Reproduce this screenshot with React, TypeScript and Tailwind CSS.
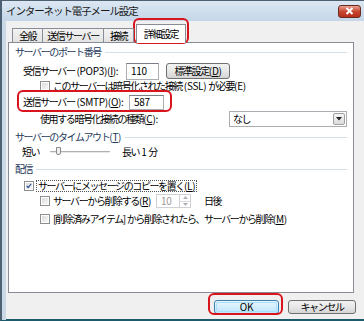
import React from "react";

const font = "font-['Noto_Sans_CJK_JP','Noto_Sans',sans-serif]";

function L({ children }: { children: React.ReactNode }) {
  return <span className="tracking-[-0.3px]">{children}</span>;
}

function Check({ checked = false }: { checked?: boolean }) {
  return (
    <div className="w-[10px] h-[10px] shrink-0 border border-[#8f8f8f] bg-white p-[1px]">
      <div className="w-full h-full bg-gradient-to-br from-[#dcdcdc] to-[#f7f7f7] flex items-center justify-center">
        {checked && (
          <svg width="8" height="8" viewBox="0 0 8 8">
            <path d="M1 4 L3 6 L7 1" stroke="#2a4d8f" strokeWidth="1.6" fill="none" />
          </svg>
        )}
      </div>
    </div>
  );
}

function GroupLabel({ text }: { text: React.ReactNode }) {
  return (
    <div className="flex items-center h-[14px]">
      <span className="text-[#1e395b]">{text}</span>
      <div className="flex-1 h-px bg-[#d5dfe5] ml-[4px]" />
    </div>
  );
}

export default function App() {
  return (
    <div className={`w-[364px] h-[321px] relative overflow-hidden bg-[#f0f0f0] text-[10px] tracking-[-1.4px] leading-none whitespace-nowrap text-black ${font}`}>
      <div className="w-full h-full flex flex-col border-l-2 border-l-[#4d6173] border-t border-t-[#4d6173] border-b-2 border-b-[#1c5a6c]">
        {/* title bar */}
        <div className="h-[20px] shrink-0 flex items-center justify-between bg-gradient-to-b from-[#dce7f2] to-[#c4d6e8] pl-[4px] pr-[3px]">
          <span className="text-[10.5px] tracking-[-1.1px] text-[#1a1a1a]">インターネット電子メール設定</span>
          <div className="w-[23px] h-[13px] rounded-[3px] border border-[#6b2a20] bg-gradient-to-b from-[#e8a090] via-[#c8452f] to-[#b5301c] flex items-center justify-center">
            <svg width="9" height="8" viewBox="0 0 9 8">
              <path d="M1.5 1 L7.5 7 M7.5 1 L1.5 7" stroke="#fff" strokeWidth="2" />
            </svg>
          </div>
        </div>

        {/* body */}
        <div className="flex-1 flex flex-col border-l-[4px] border-l-[#cbd9e6] pl-[2px] pt-[2px]">
          {/* tabs */}
          <div className="flex items-end h-[19px] pl-[4px] relative z-10">
            <div className="w-[31px] h-[14px] border border-b-0 border-[#898c95] bg-gradient-to-b from-[#f2f2f2] to-[#e3e3e3] flex items-center justify-center">全般</div>
            <div className="w-[61px] h-[14px] border border-b-0 border-l-0 border-[#898c95] bg-gradient-to-b from-[#f2f2f2] to-[#e3e3e3] flex items-center justify-center">送信サーバー</div>
            <div className="w-[30px] h-[14px] border border-b-0 border-l-0 border-[#898c95] bg-gradient-to-b from-[#f2f2f2] to-[#e3e3e3] flex items-center justify-center">接続</div>
            <div className="w-[50px] h-[19px] -mb-px ml-[2px] border border-b-0 border-[#898c95] bg-white flex items-center justify-center pb-[1px]">詳細設定</div>
          </div>

          {/* panel */}
          <div className="w-[346px] h-[251px] border border-[#898c95] bg-white flex flex-col pl-[6px] pr-[6px] pt-[2px]">
            <GroupLabel text="サーバーのポート番号" />

            <div className="flex items-center h-[18px] mt-[3px] pl-[8px]">
              <span className="w-[103px] shrink-0">受信サーバー<L> (POP3)(<u>I</u>):</L></span>
              <div className="w-[33px] h-[17px] border border-[#abadb3] border-t-[#7a7e87] flex items-center pl-[4px]"><L>110</L></div>
              <div className="ml-[7px] w-[64px] h-[16px] rounded-[3px] border border-[#707070] bg-gradient-to-b from-[#f2f2f2] via-[#e8e8e8] to-[#d4d4d4] flex items-center justify-center">標準設定<L>(<u>D</u>)</L></div>
            </div>

            <div className="flex items-center h-[12px] pl-[25px] gap-[3px]">
              <Check />
              <span>このサーバーは暗号化された接続<L> (SSL) </L>が必要<L>(E)</L></span>
            </div>

            <div className="flex items-center h-[16px] mt-[2px] pl-[8px]">
              <span className="w-[106px] shrink-0">送信サーバー<L> (SMTP)(<u>O</u>):</L></span>
              <div className="w-[35px] h-[15px] border border-[#abadb3] border-t-[#7a7e87] flex items-center pl-[4px]"><L>587</L></div>
            </div>

            <div className="flex items-center h-[16px] mt-[1px] pl-[25px]">
              <span className="w-[189px] shrink-0">使用する暗号化接続の種類<L>(<u>C</u>):</L></span>
              <div className="w-[120px] h-[16px] border border-[#abadb3] flex items-center justify-between pl-[3px] pr-[1px]">
                <span>なし</span>
                <div className="w-[12px] h-[12px] border border-[#a0a0a0] rounded-[2px] bg-gradient-to-b from-[#f5f5f5] to-[#dcdcdc] flex items-center justify-center">
                  <svg width="6" height="4" viewBox="0 0 6 4"><path d="M0 0 H6 L3 3.5 Z" fill="#222" /></svg>
                </div>
              </div>
            </div>

            <div className="mt-[3px]">
              <GroupLabel text={<>サーバーのタイムアウト<L>(<u>T</u>)</L></>} />
            </div>

            <div className="flex items-center h-[14px] mt-[1px] pl-[7px]">
              <span className="w-[28px] shrink-0">短い</span>
              <div className="relative w-[60px] h-[10px] flex items-center">
                <div className="w-full h-[2px] border-t border-[#b0b0b0] border-b border-b-[#e8e8e8]" />
                <div className="absolute left-[6px] top-0 w-[5px] h-[8px] border border-[#8a8a8a] bg-[#f0f0f0] rounded-b-[2px]" />
              </div>
              <span className="ml-[12px]">長い<L> 1 </L>分</span>
            </div>

            <div className="mt-[3px]">
              <GroupLabel text="配信" />
            </div>

            <div className="flex items-center h-[14px] mt-[3px] pl-[9px] gap-[2px]">
              <Check checked />
              <span className="border border-dotted border-[#555] px-px h-[12px] flex items-center">サーバーにメッセージのコピーを置く<L>(<u>L</u>)</L></span>
            </div>

            <div className="flex items-center h-[16px] pl-[25px]">
              <Check />
              <span className="ml-[3px] w-[103px] shrink-0">サーバーから削除する<L>(<u>R</u>)</L></span>
              <div className="w-[24px] h-[14px] border border-[#cfd1d6] flex items-center pl-[4px] text-[#9a9a9a]"><L>10</L></div>
              <div className="w-[11px] h-[14px] border border-l-0 border-[#cfd1d6] flex flex-col">
                <div className="flex-1 border-b border-[#dcdcdc] flex items-center justify-center">
                  <svg width="5" height="3" viewBox="0 0 5 3"><path d="M0 3 H5 L2.5 0 Z" fill="#b0b0b0" /></svg>
                </div>
                <div className="flex-1 flex items-center justify-center">
                  <svg width="5" height="3" viewBox="0 0 5 3"><path d="M0 0 H5 L2.5 3 Z" fill="#b0b0b0" /></svg>
                </div>
              </div>
              <span className="ml-[13px]">日後</span>
            </div>

            <div className="flex items-center h-[14px] mt-[3px] pl-[25px] gap-[3px]">
              <Check />
              <span>[削除済みアイテム]<L> </L>から削除されたら、サーバーから削除<L>(<u>M</u>)</L></span>
            </div>
          </div>

          {/* buttons */}
          <div className="flex items-center justify-end gap-[9px] h-[27px] pr-[8px]">
            <div className="w-[65px] h-[14px] rounded-[3px] border border-[#3c7fb1] bg-gradient-to-b from-[#eaf6fd] to-[#bee6fd] p-px">
              <div className="w-full h-full rounded-[2px] border border-[#a7e0fb] flex items-center justify-center"><L>OK</L></div>
            </div>
            <div className="w-[68px] h-[14px] rounded-[3px] border border-[#707070] bg-gradient-to-b from-[#f2f2f2] via-[#e8e8e8] to-[#d4d4d4] flex items-center justify-center">キャンセル</div>
          </div>
        </div>
      </div>

      {/* red highlight boxes */}
      <div className="absolute left-[133px] top-[18px] w-[56px] h-[26px] border-2 border-[#d8141c] rounded-[6px]" />
      <div className="absolute left-[17px] top-[90px] w-[155px] h-[22px] border-2 border-[#d8141c] rounded-[6px]" />
      <div className="absolute left-[208px] top-[293px] w-[75px] h-[22px] border-2 border-[#d8141c] rounded-[6px]" />
    </div>
  );
}
